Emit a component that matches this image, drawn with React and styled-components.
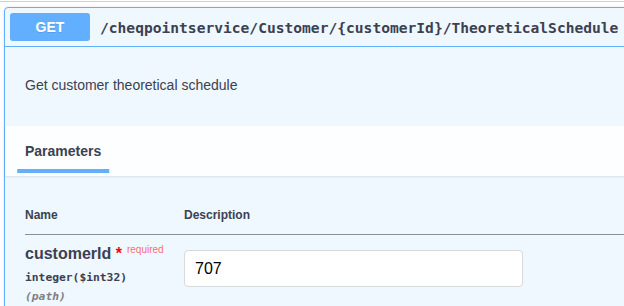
import React from "react";
import styled, { createGlobalStyle } from "styled-components";

const GlobalStyle = createGlobalStyle`
  html, body {
    margin: 0;
    padding: 0;
    background: #fff;
    overflow: hidden;
  }
  body {
    font-family: "Liberation Sans", Arial, sans-serif;
    color: #3b4151;
  }
`;

const Page = styled.div`
  width: 624px;
  height: 306px;
  overflow: hidden;
`;

const TopRule = styled.div`
  margin-top: 1px;
  height: 1px;
  background: #cfcfcf;
`;

const Opblock = styled.div`
  margin: 5px 0 0 4px;
  width: 720px;
  border: 1px solid #61affe;
  border-radius: 4px;
  background: rgba(97, 175, 254, 0.1);
  box-shadow: 0 0 3px rgba(0, 0, 0, 0.12);
`;

const Summary = styled.div`
  display: flex;
  align-items: center;
  padding: 5px;
  border-bottom: 1px solid #61affe;
`;

const Method = styled.span`
  display: inline-block;
  min-width: 80px;
  height: 28px;
  line-height: 28px;
  border-radius: 3px;
  background: #61affe;
  color: #fff;
  font-size: 14px;
  font-weight: 700;
  text-align: center;
  text-shadow: 0 1px 0 rgba(0, 0, 0, 0.1);
`;

const Path = styled.span`
  padding: 0 10px;
  font-family: "DejaVu Sans Mono", "Liberation Mono", monospace;
  font-size: 14.6px;
  font-weight: 700;
  color: #3b4151;
  white-space: nowrap;
`;

const Description = styled.div`
  padding: 30px 20px 32px;
  font-size: 14px;
  line-height: 17px;
`;

const SectionHeader = styled.div`
  display: flex;
  align-items: center;
  height: 50px;
  padding: 0 20px;
  box-sizing: border-box;
  background: rgba(255, 255, 255, 0.8);
  box-shadow: 0 1px 2px rgba(0, 0, 0, 0.1);
`;

const TabTitle = styled.h4`
  position: relative;
  margin: 0;
  font-size: 14px;
  font-weight: 700;
  line-height: 16px;

  &::after {
    content: "";
    position: absolute;
    left: 50%;
    bottom: -14px;
    width: 120%;
    height: 4px;
    transform: translateX(-50%);
    background: #61affe;
  }
`;

const TableWrap = styled.div`
  padding: 19px 0 0 20px;
`;

const Table = styled.table`
  width: 100%;
  border-collapse: collapse;
`;

const Th = styled.th`
  width: ${(p) => (p.$first ? "159px" : "auto")};
  padding: 13px 0 11px;
  text-align: left;
  font-size: 12px;
  font-weight: 700;
  line-height: 15px;
  border-bottom: 1px solid rgba(59, 65, 81, 0.35);
`;

const Td = styled.td`
  padding: 10px 0;
  vertical-align: top;
`;

const ParamName = styled.div`
  font-size: 16px;
  font-weight: 700;
  line-height: 18px;
  color: #3b4151;
`;

const Star = styled.span`
  color: red;
  font-size: 16px;
`;

const Required = styled.span`
  position: relative;
  top: -6px;
  padding: 0 5px;
  font-size: 10px;
  font-weight: 400;
  color: rgba(255, 0, 0, 0.6);
`;

const ParamType = styled.div`
  margin-top: 4px;
  font-family: "DejaVu Sans Mono", "Liberation Mono", monospace;
  font-size: 11.3px;
  font-weight: 600;
  line-height: 18px;
  color: #3b4151;
`;

const ParamIn = styled.div`
  font-family: "DejaVu Sans Mono", "Liberation Mono", monospace;
  font-size: 11.3px;
  font-style: italic;
  font-weight: 600;
  line-height: 20px;
  color: #808080;
`;

const Input = styled.input`
  display: block;
  margin: 5px 0;
  width: 339px;
  height: 37px;
  box-sizing: border-box;
  padding: 8px 10px;
  border: 1px solid #d9d9d9;
  border-radius: 4px;
  background: #fff;
  font-family: "Liberation Sans", Arial, sans-serif;
  font-size: 16px;
  color: #000;
  outline: none;
`;

export default function App() {
  return (
    <Page>
      <GlobalStyle />
      <TopRule />
      <Opblock>
        <Summary>
          <Method>GET</Method>
          <Path>/cheqpointservice/Customer/{"{customerId}"}/TheoreticalSchedule</Path>
        </Summary>
        <Description>Get customer theoretical schedule</Description>
        <SectionHeader>
          <TabTitle>Parameters</TabTitle>
        </SectionHeader>
        <TableWrap>
          <Table>
            <thead>
              <tr>
                <Th $first>Name</Th>
                <Th>Description</Th>
              </tr>
            </thead>
            <tbody>
              <tr>
                <Td>
                  <ParamName>
                    customerId<Star>&nbsp;*</Star>
                    <Required>required</Required>
                  </ParamName>
                  <ParamType>integer($int32)</ParamType>
                  <ParamIn>(path)</ParamIn>
                </Td>
                <Td>
                  <Input defaultValue="707" />
                </Td>
              </tr>
            </tbody>
          </Table>
        </TableWrap>
      </Opblock>
    </Page>
  );
}
